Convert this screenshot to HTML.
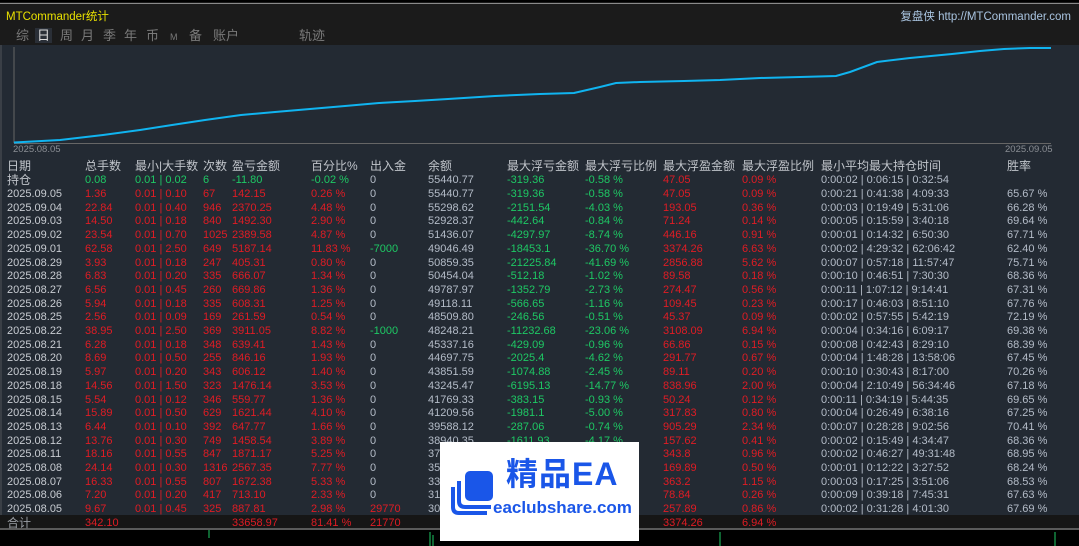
<!DOCTYPE html>
<html><head><meta charset="utf-8"><style>
*{margin:0;padding:0;box-sizing:border-box}
body{width:1079px;height:546px;background:#000;overflow:hidden;position:relative;font-family:"Liberation Sans","Noto Sans CJK SC",sans-serif;font-size:11px;color:#b4bcc8}
#top{position:absolute;left:0;top:0;width:1079px;height:45px;background:#1b1b1b;border-top:2px solid #000}
#top:before{content:"";position:absolute;left:0;right:0;top:1px;height:1px;background:#8a8a8a}
.title{position:absolute;left:6px;top:6px;color:#e8e000;font-size:11.5px}
.site{position:absolute;right:8px;top:6px;color:#a9c4e0;font-size:11.5px}
.tabs{position:absolute;top:26px;left:0;font-size:13px;color:#7a7a7a;line-height:15px}
.tabs span{position:absolute;top:0;white-space:nowrap}
.sel{background:#2a2f37;color:#dcdcdc;padding:0 2px}
#main{position:absolute;left:0;top:45px;width:1079px;height:485px;background:#232a33;border-left:2px solid #3a3f46}
.r{position:absolute;left:0;width:1079px;height:14px;line-height:14px;white-space:nowrap}
.r span{position:absolute;top:0}
.a{left:7px}.b{left:85px}.c{left:135px}.d{left:203px}.e{left:232px}.f{left:311px}.g{left:370px}.h{left:428px}.i{left:507px}.j{left:585px}.k{left:663px}.l{left:742px}.m{left:821px}.n{left:1007px}
.R{color:#e01c24}.G{color:#1ec864}.W{color:#c8ccd2}
.hd{font-size:12px;color:#c0c4ca}
#tot{position:absolute;left:0;top:515px;width:1079px;height:15px;background:#161616;border-bottom:2px solid #5a5a5a}
#wm{position:absolute;left:440px;top:442px;width:199px;height:99px;background:#fff}
</style></head><body>
<div id="top">
<div class="title">MTCommander统计</div>
<div class="site">复盘侠 http://MTCommander.com</div>
<div class="tabs">
<span style="left:16px">综</span><span class="sel" style="left:35px">日</span><span style="left:60px">周</span><span style="left:81px">月</span><span style="left:103px">季</span><span style="left:124px">年</span><span style="left:146px">币</span><span style="left:170px;font-size:9px;top:2px">M</span><span style="left:189px">备</span><span style="left:213px">账户</span><span style="left:299px">轨迹</span>
</div>
</div>
<div id="main"></div>
<svg style="position:absolute;left:0;top:0" width="1079" height="546">
<line x1="14" y1="47" x2="14" y2="143" stroke="#666" stroke-width="1"/>
<line x1="14" y1="143.5" x2="1051" y2="143.5" stroke="#666" stroke-width="1"/>
<polyline fill="none" stroke="#10b4f0" stroke-width="2" points="14,142.5 60,140 103,135 140,130 172,125 205,120 241,115 275,112 310,109 345,106 379,103 415,101 448,99 495,96 540,94 574,93 600,87 616,83 640,82 684,81 720,80 760,78 800,77 836,76 850,72 877,62 910,58 952,54 980,51 1004,49 1030,48 1051,48"/>
<line x1="430" y1="532" x2="430" y2="546" stroke="#1ec864"/><line x1="433" y1="535" x2="433" y2="546" stroke="#1ec864"/><line x1="209" y1="530" x2="209" y2="538" stroke="#1ec864"/><line x1="720" y1="532" x2="720" y2="546" stroke="#1ec864"/><line x1="1055" y1="532" x2="1055" y2="546" stroke="#1ec864"/>
</svg>
<div style="position:absolute;left:13px;top:144px;font-size:9.5px;color:#8a8e94">2025.08.05</div>
<div style="position:absolute;left:1005px;top:144px;font-size:9.5px;color:#8a8e94">2025.09.05</div>

<div class="r hd" style="top:159px"><span class="a">日期</span><span class="b">总手数</span><span class="c">最小|大手数</span><span class="d">次数</span><span class="e">盈亏金额</span><span class="f">百分比%</span><span class="g">出入金</span><span class="h">余额</span><span class="i">最大浮亏金额</span><span class="j">最大浮亏比例</span><span class="k">最大浮盈金额</span><span class="l">最大浮盈比例</span><span class="m">最小平均最大持仓时间</span><span class="n">胜率</span></div>
<div class="r" style="top:173px"><span class="a hd">持仓</span><span class="b G">0.08</span><span class="c G">0.01 | 0.02</span><span class="d G">6</span><span class="e G">-11.80</span><span class="f G">-0.02 %</span><span class="g">0</span><span class="h">55440.77</span><span class="i G">-319.36</span><span class="j G">-0.58 %</span><span class="k R">47.05</span><span class="l R">0.09 %</span><span class="m">0:00:02 | 0:06:15 | 0:32:54</span></div>

<div class="r" style="top:187px"><span class="a W">2025.09.05</span><span class="b R">1.36</span><span class="c R">0.01 | 0.10</span><span class="d R">67</span><span class="e R">142.15</span><span class="f R">0.26 %</span><span class="g">0</span><span class="h">55440.77</span><span class="i G">-319.36</span><span class="j G">-0.58 %</span><span class="k R">47.05</span><span class="l R">0.09 %</span><span class="m">0:00:21 | 0:41:38 | 4:09:33</span><span class="n">65.67 %</span></div>
<div class="r" style="top:200.7px"><span class="a W">2025.09.04</span><span class="b R">22.84</span><span class="c R">0.01 | 0.40</span><span class="d R">946</span><span class="e R">2370.25</span><span class="f R">4.48 %</span><span class="g">0</span><span class="h">55298.62</span><span class="i G">-2151.54</span><span class="j G">-4.03 %</span><span class="k R">193.05</span><span class="l R">0.36 %</span><span class="m">0:00:03 | 0:19:49 | 5:31:06</span><span class="n">66.28 %</span></div>
<div class="r" style="top:214.4px"><span class="a W">2025.09.03</span><span class="b R">14.50</span><span class="c R">0.01 | 0.18</span><span class="d R">840</span><span class="e R">1492.30</span><span class="f R">2.90 %</span><span class="g">0</span><span class="h">52928.37</span><span class="i G">-442.64</span><span class="j G">-0.84 %</span><span class="k R">71.24</span><span class="l R">0.14 %</span><span class="m">0:00:05 | 0:15:59 | 3:40:18</span><span class="n">69.64 %</span></div>
<div class="r" style="top:228.1px"><span class="a W">2025.09.02</span><span class="b R">23.54</span><span class="c R">0.01 | 0.70</span><span class="d R">1025</span><span class="e R">2389.58</span><span class="f R">4.87 %</span><span class="g">0</span><span class="h">51436.07</span><span class="i G">-4297.97</span><span class="j G">-8.74 %</span><span class="k R">446.16</span><span class="l R">0.91 %</span><span class="m">0:00:01 | 0:14:32 | 6:50:30</span><span class="n">67.71 %</span></div>
<div class="r" style="top:241.8px"><span class="a W">2025.09.01</span><span class="b R">62.58</span><span class="c R">0.01 | 2.50</span><span class="d R">649</span><span class="e R">5187.14</span><span class="f R">11.83 %</span><span class="g G">-7000</span><span class="h">49046.49</span><span class="i G">-18453.1</span><span class="j G">-36.70 %</span><span class="k R">3374.26</span><span class="l R">6.63 %</span><span class="m">0:00:02 | 4:29:32 | 62:06:42</span><span class="n">62.40 %</span></div>
<div class="r" style="top:255.5px"><span class="a W">2025.08.29</span><span class="b R">3.93</span><span class="c R">0.01 | 0.18</span><span class="d R">247</span><span class="e R">405.31</span><span class="f R">0.80 %</span><span class="g">0</span><span class="h">50859.35</span><span class="i G">-21225.84</span><span class="j G">-41.69 %</span><span class="k R">2856.88</span><span class="l R">5.62 %</span><span class="m">0:00:07 | 0:57:18 | 11:57:47</span><span class="n">75.71 %</span></div>
<div class="r" style="top:269.2px"><span class="a W">2025.08.28</span><span class="b R">6.83</span><span class="c R">0.01 | 0.20</span><span class="d R">335</span><span class="e R">666.07</span><span class="f R">1.34 %</span><span class="g">0</span><span class="h">50454.04</span><span class="i G">-512.18</span><span class="j G">-1.02 %</span><span class="k R">89.58</span><span class="l R">0.18 %</span><span class="m">0:00:10 | 0:46:51 | 7:30:30</span><span class="n">68.36 %</span></div>
<div class="r" style="top:282.9px"><span class="a W">2025.08.27</span><span class="b R">6.56</span><span class="c R">0.01 | 0.45</span><span class="d R">260</span><span class="e R">669.86</span><span class="f R">1.36 %</span><span class="g">0</span><span class="h">49787.97</span><span class="i G">-1352.79</span><span class="j G">-2.73 %</span><span class="k R">274.47</span><span class="l R">0.56 %</span><span class="m">0:00:11 | 1:07:12 | 9:14:41</span><span class="n">67.31 %</span></div>
<div class="r" style="top:296.6px"><span class="a W">2025.08.26</span><span class="b R">5.94</span><span class="c R">0.01 | 0.18</span><span class="d R">335</span><span class="e R">608.31</span><span class="f R">1.25 %</span><span class="g">0</span><span class="h">49118.11</span><span class="i G">-566.65</span><span class="j G">-1.16 %</span><span class="k R">109.45</span><span class="l R">0.23 %</span><span class="m">0:00:17 | 0:46:03 | 8:51:10</span><span class="n">67.76 %</span></div>
<div class="r" style="top:310.3px"><span class="a W">2025.08.25</span><span class="b R">2.56</span><span class="c R">0.01 | 0.09</span><span class="d R">169</span><span class="e R">261.59</span><span class="f R">0.54 %</span><span class="g">0</span><span class="h">48509.80</span><span class="i G">-246.56</span><span class="j G">-0.51 %</span><span class="k R">45.37</span><span class="l R">0.09 %</span><span class="m">0:00:02 | 0:57:55 | 5:42:19</span><span class="n">72.19 %</span></div>
<div class="r" style="top:324px"><span class="a W">2025.08.22</span><span class="b R">38.95</span><span class="c R">0.01 | 2.50</span><span class="d R">369</span><span class="e R">3911.05</span><span class="f R">8.82 %</span><span class="g G">-1000</span><span class="h">48248.21</span><span class="i G">-11232.68</span><span class="j G">-23.06 %</span><span class="k R">3108.09</span><span class="l R">6.94 %</span><span class="m">0:00:04 | 0:34:16 | 6:09:17</span><span class="n">69.38 %</span></div>
<div class="r" style="top:337.7px"><span class="a W">2025.08.21</span><span class="b R">6.28</span><span class="c R">0.01 | 0.18</span><span class="d R">348</span><span class="e R">639.41</span><span class="f R">1.43 %</span><span class="g">0</span><span class="h">45337.16</span><span class="i G">-429.09</span><span class="j G">-0.96 %</span><span class="k R">66.86</span><span class="l R">0.15 %</span><span class="m">0:00:08 | 0:42:43 | 8:29:10</span><span class="n">68.39 %</span></div>
<div class="r" style="top:351.4px"><span class="a W">2025.08.20</span><span class="b R">8.69</span><span class="c R">0.01 | 0.50</span><span class="d R">255</span><span class="e R">846.16</span><span class="f R">1.93 %</span><span class="g">0</span><span class="h">44697.75</span><span class="i G">-2025.4</span><span class="j G">-4.62 %</span><span class="k R">291.77</span><span class="l R">0.67 %</span><span class="m">0:00:04 | 1:48:28 | 13:58:06</span><span class="n">67.45 %</span></div>
<div class="r" style="top:365.1px"><span class="a W">2025.08.19</span><span class="b R">5.97</span><span class="c R">0.01 | 0.20</span><span class="d R">343</span><span class="e R">606.12</span><span class="f R">1.40 %</span><span class="g">0</span><span class="h">43851.59</span><span class="i G">-1074.88</span><span class="j G">-2.45 %</span><span class="k R">89.11</span><span class="l R">0.20 %</span><span class="m">0:00:10 | 0:30:43 | 8:17:00</span><span class="n">70.26 %</span></div>
<div class="r" style="top:378.8px"><span class="a W">2025.08.18</span><span class="b R">14.56</span><span class="c R">0.01 | 1.50</span><span class="d R">323</span><span class="e R">1476.14</span><span class="f R">3.53 %</span><span class="g">0</span><span class="h">43245.47</span><span class="i G">-6195.13</span><span class="j G">-14.77 %</span><span class="k R">838.96</span><span class="l R">2.00 %</span><span class="m">0:00:04 | 2:10:49 | 56:34:46</span><span class="n">67.18 %</span></div>
<div class="r" style="top:392.5px"><span class="a W">2025.08.15</span><span class="b R">5.54</span><span class="c R">0.01 | 0.12</span><span class="d R">346</span><span class="e R">559.77</span><span class="f R">1.36 %</span><span class="g">0</span><span class="h">41769.33</span><span class="i G">-383.15</span><span class="j G">-0.93 %</span><span class="k R">50.24</span><span class="l R">0.12 %</span><span class="m">0:00:11 | 0:34:19 | 5:44:35</span><span class="n">69.65 %</span></div>
<div class="r" style="top:406.2px"><span class="a W">2025.08.14</span><span class="b R">15.89</span><span class="c R">0.01 | 0.50</span><span class="d R">629</span><span class="e R">1621.44</span><span class="f R">4.10 %</span><span class="g">0</span><span class="h">41209.56</span><span class="i G">-1981.1</span><span class="j G">-5.00 %</span><span class="k R">317.83</span><span class="l R">0.80 %</span><span class="m">0:00:04 | 0:26:49 | 6:38:16</span><span class="n">67.25 %</span></div>
<div class="r" style="top:419.9px"><span class="a W">2025.08.13</span><span class="b R">6.44</span><span class="c R">0.01 | 0.10</span><span class="d R">392</span><span class="e R">647.77</span><span class="f R">1.66 %</span><span class="g">0</span><span class="h">39588.12</span><span class="i G">-287.06</span><span class="j G">-0.74 %</span><span class="k R">905.29</span><span class="l R">2.34 %</span><span class="m">0:00:07 | 0:28:28 | 9:02:56</span><span class="n">70.41 %</span></div>
<div class="r" style="top:433.6px"><span class="a W">2025.08.12</span><span class="b R">13.76</span><span class="c R">0.01 | 0.30</span><span class="d R">749</span><span class="e R">1458.54</span><span class="f R">3.89 %</span><span class="g">0</span><span class="h">38940.35</span><span class="i G">-1611.93</span><span class="j G">-4.17 %</span><span class="k R">157.62</span><span class="l R">0.41 %</span><span class="m">0:00:02 | 0:15:49 | 4:34:47</span><span class="n">68.36 %</span></div>
<div class="r" style="top:447.3px"><span class="a W">2025.08.11</span><span class="b R">18.16</span><span class="c R">0.01 | 0.55</span><span class="d R">847</span><span class="e R">1871.17</span><span class="f R">5.25 %</span><span class="g">0</span><span class="h">37481.81</span><span class="k R">343.8</span><span class="l R">0.96 %</span><span class="m">0:00:02 | 0:46:27 | 49:31:48</span><span class="n">68.95 %</span></div>
<div class="r" style="top:461px"><span class="a W">2025.08.08</span><span class="b R">24.14</span><span class="c R">0.01 | 0.30</span><span class="d R">1316</span><span class="e R">2567.35</span><span class="f R">7.77 %</span><span class="g">0</span><span class="h">35610.64</span><span class="k R">169.89</span><span class="l R">0.50 %</span><span class="m">0:00:01 | 0:12:22 | 3:27:52</span><span class="n">68.24 %</span></div>
<div class="r" style="top:474.7px"><span class="a W">2025.08.07</span><span class="b R">16.33</span><span class="c R">0.01 | 0.55</span><span class="d R">807</span><span class="e R">1672.38</span><span class="f R">5.33 %</span><span class="g">0</span><span class="h">33043.29</span><span class="k R">363.2</span><span class="l R">1.15 %</span><span class="m">0:00:03 | 0:17:25 | 3:51:06</span><span class="n">68.53 %</span></div>
<div class="r" style="top:488.4px"><span class="a W">2025.08.06</span><span class="b R">7.20</span><span class="c R">0.01 | 0.20</span><span class="d R">417</span><span class="e R">713.10</span><span class="f R">2.33 %</span><span class="g">0</span><span class="h">31370.91</span><span class="k R">78.84</span><span class="l R">0.26 %</span><span class="m">0:00:09 | 0:39:18 | 7:45:31</span><span class="n">67.63 %</span></div>
<div class="r" style="top:502.1px"><span class="a W">2025.08.05</span><span class="b R">9.67</span><span class="c R">0.01 | 0.45</span><span class="d R">325</span><span class="e R">887.81</span><span class="f R">2.98 %</span><span class="g R">29770</span><span class="h">30657.81</span><span class="k R">257.89</span><span class="l R">0.86 %</span><span class="m">0:00:02 | 0:31:28 | 4:01:30</span><span class="n">67.69 %</span></div>
<div id="tot"></div>
<div class="r" style="top:515.5px"><span class="a hd" style="color:#9a9ea4">合计</span><span class="b R">342.10</span><span class="e R">33658.97</span><span class="f R">81.41 %</span><span class="g R">21770</span><span class="k R">3374.26</span><span class="l R">6.94 %</span></div>

<div id="wm">
<svg style="position:absolute;left:7px;top:27px" width="48" height="46" viewBox="0 0 48 46">
<path d="M6 18 L6 38 Q6 44 12 44 L40 44" fill="none" stroke="#1a56e8" stroke-width="4"/>
<path d="M12 12 L12 32 Q12 38 18 38 L44 38" fill="none" stroke="#1a56e8" stroke-width="4"/>
<rect x="18" y="2" width="28" height="30" rx="5" fill="#1a56e8"/>
</svg>
<div style="position:absolute;left:66px;top:12px;font-size:32px;font-weight:bold;color:#1a56e8;letter-spacing:1px;line-height:40px">精品EA</div>
<div style="position:absolute;left:53px;top:56px;font-size:17px;color:#1a56e8;font-weight:bold;line-height:20px">eaclubshare.com</div>
</div>
</body></html>
